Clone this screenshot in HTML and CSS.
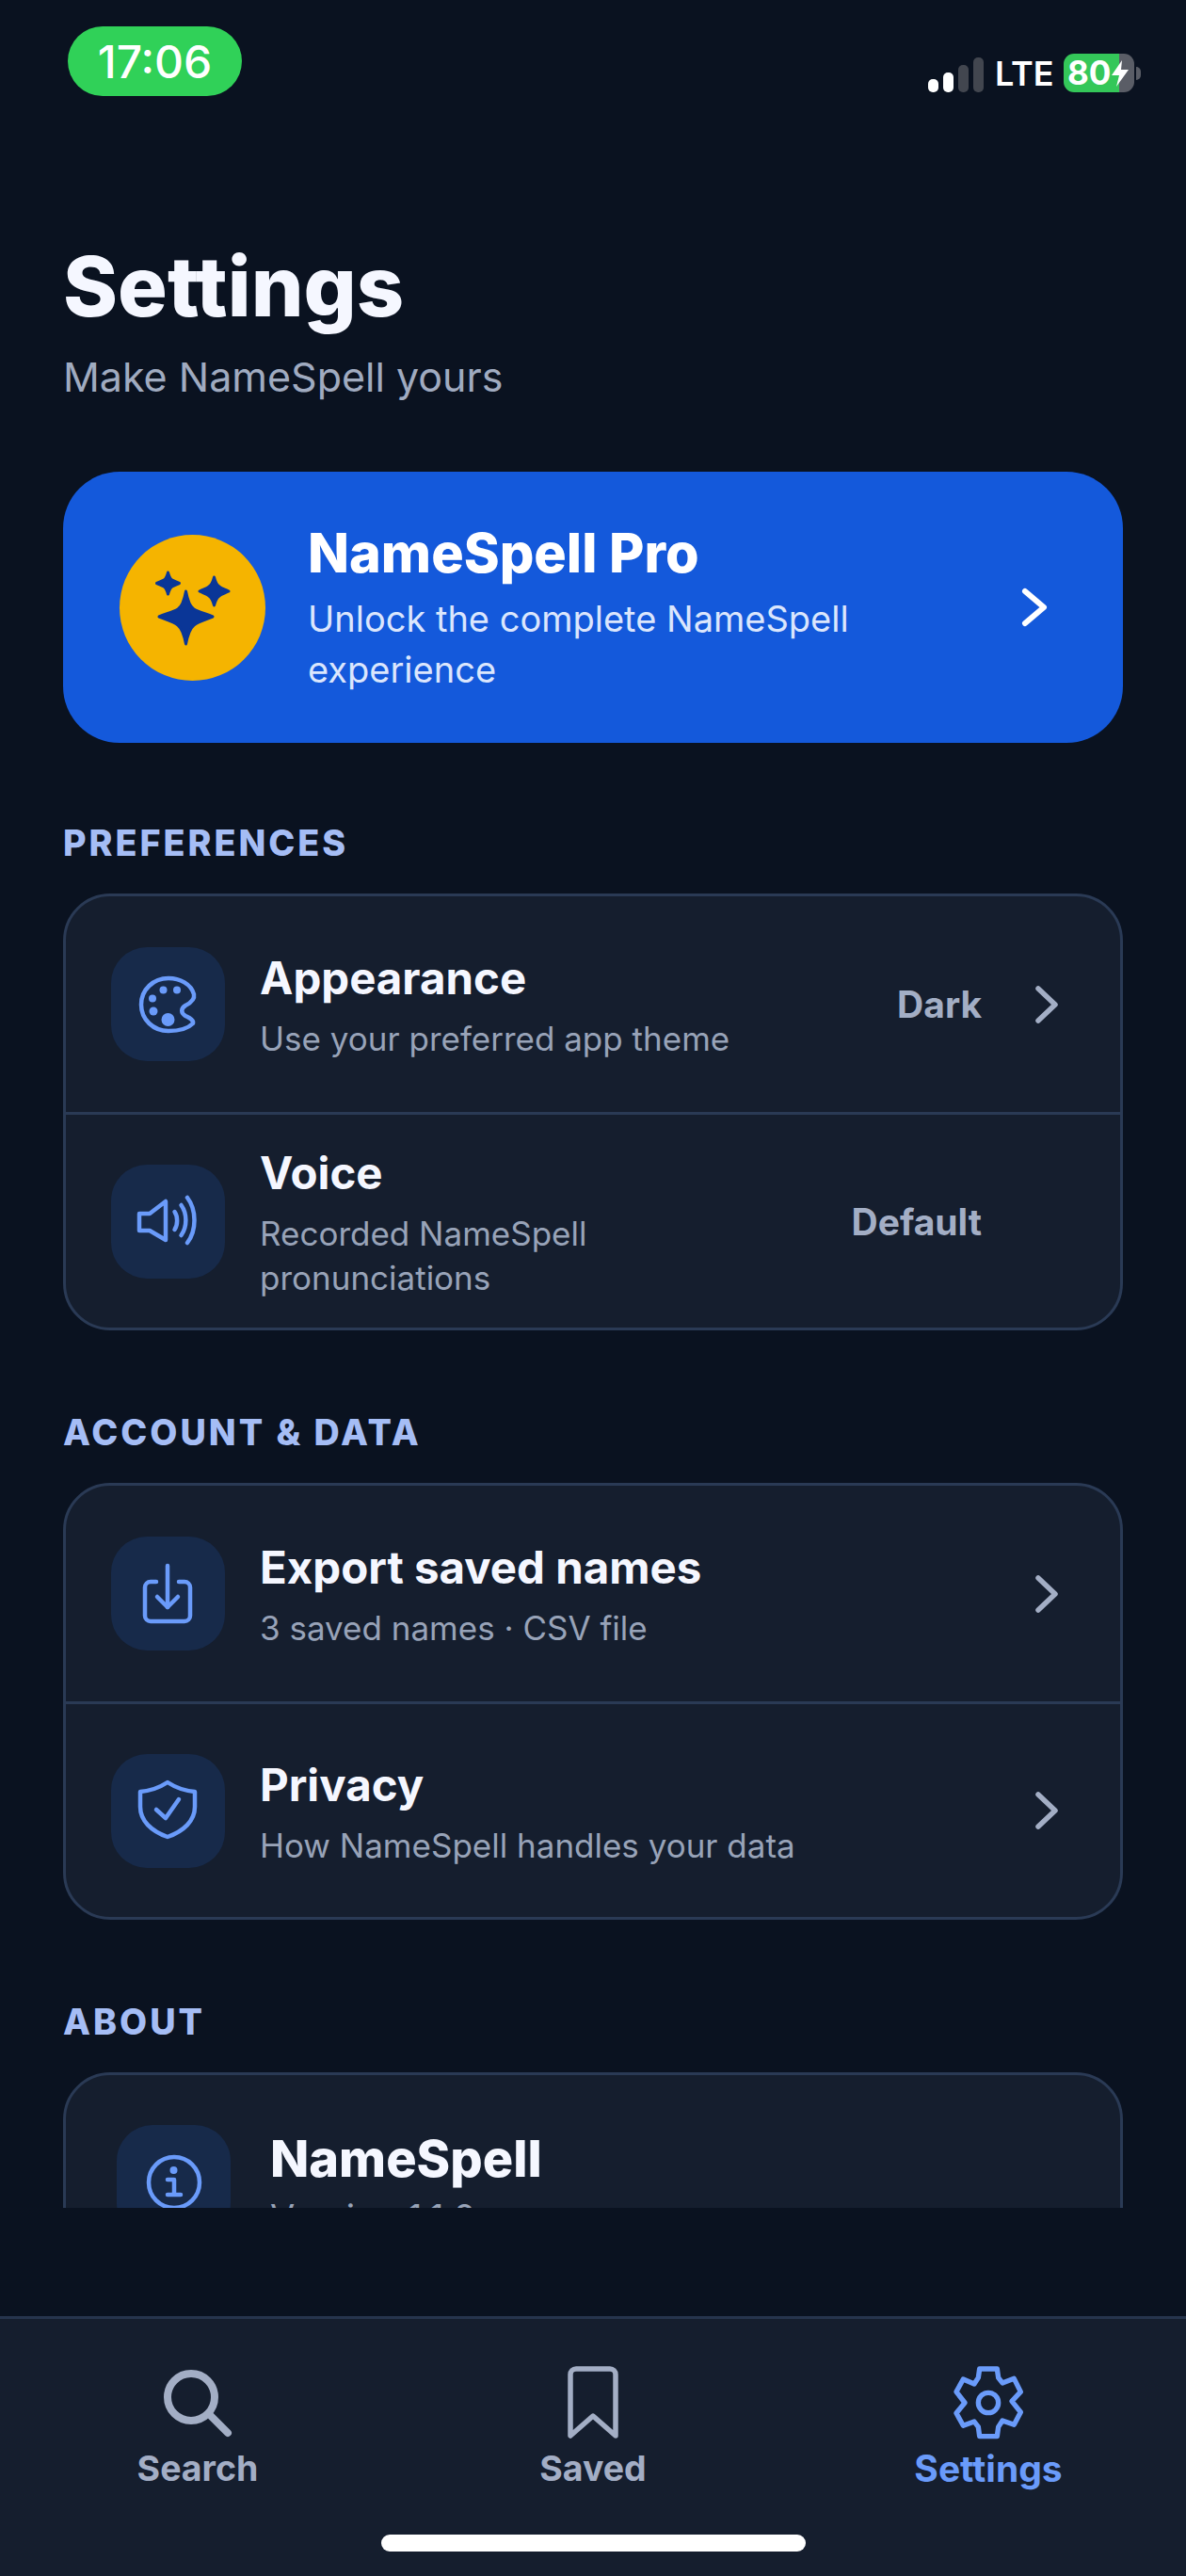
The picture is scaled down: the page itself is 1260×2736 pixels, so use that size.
FILE: index.html
```html
<!DOCTYPE html>
<html lang="en">
<head>
  <meta charset="UTF-8">
  <meta name="viewport" content="width=device-width, initial-scale=1.0">
  <title>Settings</title>
  <link rel="stylesheet" href="styles.css">
</head>
<body>
  <div class="screen">
    <div class="status-bar">
      <div class="time-pill">17:06</div>
      <div class="status-right">
        <div class="signal">
          <span class="bar bar-1"></span>
          <span class="bar bar-2"></span>
          <span class="bar bar-3"></span>
          <span class="bar bar-4"></span>
        </div>
        <span class="lte">LTE</span>
        <div class="battery">
          <span class="battery-level">80</span>
          <svg class="bolt" viewBox="0 0 18 28"><path d="M11 0 L0 16 H8 L5 28 L18 10 H10 Z" fill="#fff"/></svg>
        </div>
        <span class="battery-nub"></span>
      </div>
    </div>

    <div class="scroll">
      <h1>Settings</h1>
      <p class="subtitle">Make NameSpell yours</p>

      <div class="pro-banner">
        <div class="pro-icon">
          <svg viewBox="0 0 155 155" width="155" height="155" fill="#0a3697" stroke="#0a3697" stroke-width="3" stroke-linejoin="round">
            <path d="M70.5 60 C72 68 74 76 79 79 C84 82 92 84 99 87 C92 90 84 92 79 96 C74 100 72 108 70.5 116 C69 108 67 100 62 96 C57 92 49 90 42 87 C49 84 57 82 62 79 C67 76 69 68 70.5 60 Z"/>
            <path d="M51.5 40 C53 46 54 47 56 48 C58 49 60 50 63.5 51.5 C60 53 58 54 56 55 C54 56 53 58 51.5 63 C50 58 49 56 47 55 C45 54 43 53 39.5 51.5 C43 50 45 49 47 48 C49 47 50 46 51.5 40 Z"/>
            <path d="M100.5 45 C102 51 103 53 106 55 C108 57 112 58 116 60 C112 62 108 63 106 65 C103 67 102 69 100.5 75 C99 69 98 67 95 65 C93 63 89 62 85 60 C89 58 93 57 95 55 C98 53 99 51 100.5 45 Z"/>
          </svg>
        </div>
        <div class="pro-text">
          <div class="pro-title">NameSpell Pro</div>
          <div class="pro-sub">Unlock the complete NameSpell experience</div>
        </div>
        <svg class="pro-chevron" viewBox="0 0 32 48" width="32" height="48"><path d="M6 7 L26 24 L6 41"/></svg>
      </div>

      <h2 class="section-label">PREFERENCES</h2>
      <div class="card">
        <div class="row">
          <div class="tile">
            <svg viewBox="0 0 72 72" width="72" height="72" class="line-icon">
              <path d="M36 8 C20 8 7 20 7 36 C7 52 20 64 36 64 C46 64 56 62 62 56 C63 52 58 50 54 48 C49 45 49 40 54 37 C60 34 64 30 63 25 C60 14 48 8 36 8 Z"/>
              <circle class="dot" cx="30.5" cy="20.5" r="4"/>
              <circle class="dot" cx="45" cy="20.5" r="4"/>
              <circle class="dot" cx="19" cy="29.5" r="4"/>
              <circle class="dot" cx="20" cy="43" r="4.5"/>
              <circle class="dot" cx="35.5" cy="52" r="7"/>
            </svg>
          </div>
          <div class="row-text">
            <div class="row-title">Appearance</div>
            <div class="row-sub">Use your preferred app theme</div>
          </div>
          <span class="row-value">Dark</span>
          <svg class="chevron" viewBox="0 0 30 48" width="30" height="48"><path d="M5 7 L23 24 L5 41"/></svg>
        </div>
        <div class="row">
          <div class="tile">
            <svg viewBox="0 0 72 72" width="72" height="72" class="line-icon">
              <path d="M5 28 H16 L33 15 V56 L16 46 H5 Z"/>
              <path d="M42.5 26 C46 31 46 40 42.5 45"/>
              <path d="M49.5 19 C56 28 56 42 49.5 51"/>
              <path d="M56 11 C66 24 66 46 56 59"/>
            </svg>
          </div>
          <div class="row-text row-text-narrow">
            <div class="row-title">Voice</div>
            <div class="row-sub">Recorded NameSpell pronunciations</div>
          </div>
          <span class="row-value">Default</span>
          <span class="chevron-space"></span>
        </div>
      </div>

      <h2 class="section-label">ACCOUNT &amp; DATA</h2>
      <div class="card">
        <div class="row">
          <div class="tile">
            <svg viewBox="0 0 72 72" width="72" height="72" class="line-icon">
              <path d="M23 23 H17 A6 6 0 0 0 11 29 V59 A6 6 0 0 0 17 65 H53 A6 6 0 0 0 59 59 V29 A6 6 0 0 0 53 23 H47"/>
              <path d="M35 6 V50"/>
              <path d="M24 39 L35 50 L46 39"/>
            </svg>
          </div>
          <div class="row-text">
            <div class="row-title">Export saved names</div>
            <div class="row-sub">3 saved names · CSV file</div>
          </div>
          <svg class="chevron" viewBox="0 0 30 48" width="30" height="48"><path d="M5 7 L23 24 L5 41"/></svg>
        </div>
        <div class="row">
          <div class="tile">
            <svg viewBox="0 0 72 72" width="72" height="72" class="line-icon">
              <path d="M35 6 C44 12 54 15 64 16 V32 C64 47 52 58 35 64 C18 58 6 47 6 32 V16 C16 15 26 12 35 6 Z"/>
              <path d="M23 35 L33 44 L47 24"/>
            </svg>
          </div>
          <div class="row-text">
            <div class="row-title">Privacy</div>
            <div class="row-sub">How NameSpell handles your data</div>
          </div>
          <svg class="chevron" viewBox="0 0 30 48" width="30" height="48"><path d="M5 7 L23 24 L5 41"/></svg>
        </div>
      </div>

      <h2 class="section-label">ABOUT</h2>
      <div class="card about-card">
        <div class="row about-row">
          <div class="tile">
            <svg viewBox="0 0 72 72" width="72" height="72" class="line-icon">
              <circle cx="36" cy="36" r="27"/>
              <circle class="dot" cx="35.5" cy="23" r="4"/>
              <path d="M29 33 H36 V49 M29 49 H43"/>
            </svg>
          </div>
          <div class="row-text">
            <div class="about-title">NameSpell</div>
            <div class="row-sub">Version 1.1.0</div>
          </div>
        </div>
      </div>
    </div>

    <nav class="tab-bar">
      <div class="tabs">
        <div class="tab">
          <svg viewBox="0 0 94 94" width="94" height="94" class="tab-icon search"><circle cx="40" cy="41" r="25"/><path d="M60 60 L79 79"/></svg>
          <span>Search</span>
        </div>
        <div class="tab">
          <svg viewBox="0 0 94 94" width="94" height="94" class="tab-icon"><path d="M23 82 V17 A6 6 0 0 1 29 11 H65 A6 6 0 0 1 71 17 V82 L47 61 Z"/></svg>
          <span>Saved</span>
        </div>
        <div class="tab tab-active">
          <svg viewBox="39 14 282 282" width="94" height="94" class="tab-icon gear">
            <path d="M152 47 H208 L212 75 L225 92 L262 78 L283 120 L255 150 L283 185 L262 225 L225 212 L212 232 L208 262 H152 L148 232 L135 215 L100 228 L78 188 L105 155 L78 120 L100 80 L135 95 L148 75 Z"/>
            <circle cx="180" cy="155" r="32"/>
          </svg>
          <span>Settings</span>
        </div>
      </div>
      <div class="home-bar"></div>
    </nav>
  </div>
</body>
</html>
```

FILE: styles.css
```css
* {
  box-sizing: border-box;
}

body {
  margin: 0;
  font-family: Inter, "Liberation Sans", sans-serif;
  background-color: #0a1220;
  color: #f5f7ff;
}

.screen {
  width: 1260px;
  height: 2736px;
  display: flex;
  flex-direction: column;
  overflow: hidden;
}

/* status bar */
.status-bar {
  height: 130px;
  padding: 28px 48px 0 72px;
  display: flex;
  justify-content: space-between;
  align-items: flex-start;
  flex-shrink: 0;
}

.time-pill {
  width: 185px;
  height: 74px;
  border-radius: 37px;
  background-color: #30d158;
  color: #fff;
  font-size: 48px;
  font-weight: 500;
  display: flex;
  align-items: center;
  justify-content: center;
}

.status-right {
  margin-top: 29px;
  display: flex;
  align-items: center;
  height: 41px;
}

.signal {
  display: flex;
  align-items: flex-end;
  gap: 5px;
  height: 37px;
  margin-top: 4px;
  margin-right: 12px;
}

.bar {
  width: 11px;
  border-radius: 5px;
  background-color: #fff;
}

.bar-1 { height: 14px; }
.bar-2 { height: 21px; }
.bar-3 { height: 29px; background-color: #42464f; }
.bar-4 { height: 37px; background-color: #42464f; }

.lte {
  font-size: 36px;
  font-weight: 600;
  color: #fff;
  width: 73px;
}

.battery {
  width: 75px;
  height: 41px;
  border-radius: 11px;
  background: linear-gradient(90deg, #34c759 59px, #5a5d66 59px);
  display: flex;
  align-items: center;
  padding-left: 4px;
  color: #fff;
}

.battery-level {
  font-size: 35px;
  font-weight: 700;
  line-height: 41px;
}

.bolt {
  width: 18px;
  height: 28px;
  margin-left: 1px;
}

.battery-nub {
  width: 5px;
  height: 14px;
  margin-left: 2px;
  border-radius: 0 7px 7px 0;
  background-color: #5a5d66;
}

/* scrolling content */
.scroll {
  height: 2215px;
  flex-shrink: 0;
  padding: 0 67px;
  overflow: hidden;
}

h1 {
  margin: 124px 0 0;
  font-size: 88px;
  line-height: 100px;
  font-weight: 800;
}

.subtitle {
  margin: 20px 0 0;
  font-size: 43px;
  line-height: 52px;
  color: #a0abc0;
}

.pro-banner {
  margin-top: 75px;
  margin-bottom: -2px;
  height: 288px;
  border-radius: 60px;
  background-color: #1459db;
  padding: 0 60px;
  display: flex;
  align-items: center;
}

.pro-icon {
  width: 155px;
  height: 155px;
  border-radius: 50%;
  background-color: #f5b400;
  flex-shrink: 0;
}

.pro-icon svg {
  display: block;
}

.pro-text {
  margin-left: 45px;
  width: 600px;
}

.pro-title {
  font-size: 57.5px;
  line-height: 68px;
  font-weight: 800;
  color: #fff;
}

.pro-sub {
  margin-top: 9px;
  font-size: 38px;
  line-height: 54px;
  color: #dbe6fd;
}

.pro-chevron {
  margin-left: auto;
  margin-right: 18px;
  fill: none;
  stroke: #fff;
  stroke-width: 6;
  stroke-linecap: round;
  stroke-linejoin: round;
}

.section-label {
  margin: 86px 0 32px;
  font-size: 37.7px;
  line-height: 44px;
  font-weight: 800;
  letter-spacing: 3px;
  color: #a5bdf5;
}

.card {
  border: 3px solid #2a3a55;
  border-radius: 50px;
  background-color: #151e2e;
}

.row {
  min-height: 232px;
  padding: 0 62px 0 48px;
  display: flex;
  align-items: center;
  border-bottom: 3px solid #2a3a55;
}

.row:last-child {
  min-height: 226px;
  border-bottom: none;
}

.tile {
  width: 121px;
  height: 121px;
  border-radius: 38px;
  background-color: #172a4a;
  flex-shrink: 0;
  display: flex;
  align-items: center;
  justify-content: center;
}

.line-icon {
  fill: none;
  stroke: #6a9bfa;
  stroke-width: 4.5;
  stroke-linecap: round;
  stroke-linejoin: round;
}

.line-icon .dot {
  fill: #6a9bfa;
  stroke: none;
}

.row-text {
  margin-left: 37px;
  padding-top: 4px;
  flex: 1;
}

.row-text-narrow {
  flex: none;
  width: 500px;
  margin-right: auto;
}

.row-title {
  font-size: 47.4px;
  line-height: 58px;
  font-weight: 700;
}

.row-sub {
  margin-top: 12px;
  font-size: 35px;
  line-height: 47px;
  color: #98a3b8;
}

.row-value {
  font-size: 39px;
  font-weight: 700;
  color: #a3aec5;
  white-space: nowrap;
}

.chevron, .chevron-space {
  width: 30px;
  margin-left: 55px;
  flex-shrink: 0;
}

.chevron {
  fill: none;
  stroke: #a3aec5;
  stroke-width: 5.5;
  stroke-linecap: round;
  stroke-linejoin: round;
}

.about-row {
  padding: 53px 54px;
  align-items: flex-start;
}

.about-row .row-text {
  margin-left: 42px;
  padding-top: 4px;
}

.about-row .row-sub {
  margin-top: 7px;
  font-size: 38px;
}

.about-title {
  font-size: 54px;
  line-height: 64px;
  font-weight: 800;
}

/* bottom tabs */
.tab-bar {
  margin-top: 115px;
  flex-grow: 1;
  border-top: 3px solid #26344d;
  background-color: #151e2e;
  display: flex;
  flex-direction: column;
  align-items: center;
}

.tabs {
  width: 100%;
  display: flex;
  padding-top: 42px;
}

.tab {
  width: 420px;
  display: flex;
  flex-direction: column;
  align-items: center;
  font-size: 37.5px;
  line-height: 44px;
  font-weight: 700;
  color: #a3aec5;
}

.tab-active {
  font-size: 39px;
  color: #6a9bfa;
}

.tab-icon {
  fill: none;
  stroke: #a3aec5;
  stroke-width: 5.5;
  stroke-linecap: round;
  stroke-linejoin: round;
  margin-bottom: 1px;
}

.search {
  stroke-width: 8;
}

.gear {
  stroke: #6a9bfa;
  stroke-width: 16;
}

.home-bar {
  margin-top: 48px;
  width: 451px;
  height: 18px;
  border-radius: 9px;
  background-color: #fff;
}
```
